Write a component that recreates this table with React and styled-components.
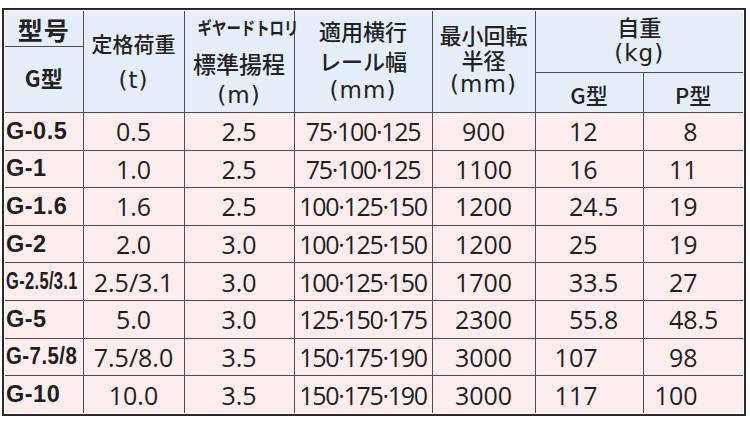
import React from 'react';
import styled, { createGlobalStyle } from 'styled-components';

const Global = createGlobalStyle`
  html, body { margin: 0; padding: 0; background: #ffffff; }
  body { font-family: "Noto Sans CJK JP", "Noto Sans", sans-serif; color: #222; }
`;

const LINE = '#4f4f4f';

const Frame = styled.div`
  box-sizing: border-box;
  width: 744px;
  margin: 8px 0 0 2px;
  border: 2px solid #2a2a2a;
  padding: 1px;
  background: #ffffff;
`;

const Table = styled.table`
  width: 738px;
  border-collapse: collapse;
  border-style: hidden;
  table-layout: fixed;
`;

const HeadRow = styled.tr`
  height: ${p => p.$h}px;
`;

const HeadCell = styled.th`
  background: #e5eef9;
  border: 1.5px solid ${LINE};
  padding: ${p => p.$pt || 0}px 0 ${p => p.$pb || 0}px 0;
  vertical-align: ${p => p.$top ? 'top' : 'middle'};
  text-align: center;
  font-weight: 500;
  color: #222;
  white-space: nowrap;
`;

const JpLine = styled.div`
  font-family: "Noto Sans CJK JP", sans-serif;
  font-size: ${p => p.$size || 22}px;
  line-height: ${p => p.$lh || 30}px;
  font-weight: ${p => p.$bold ? 700 : 500};
  letter-spacing: ${p => p.$ls || 0}px;
`;

const UnitLine = styled.div`
  font-family: "DejaVu Sans", sans-serif;
  font-size: 23px;
  line-height: ${p => p.$lh || 30}px;
  font-weight: 400;
  letter-spacing: 1px;
`;

const KanaLine = styled.div`
  font-family: "Noto Sans CJK JP", sans-serif;
  font-size: 18px;
  line-height: ${p => p.$lh || 30}px;
  font-weight: 700;
  white-space: nowrap;
`;

const Squeeze = styled.span`
  display: inline-block;
  transform: scaleX(${p => p.$x});
  transform-origin: ${p => p.$origin || 'center'};
  white-space: nowrap;
`;

const BodyRow = styled.tr`
  height: 37.6px;
`;

const Cell = styled.td`
  background: #fdeded;
  border: 1.5px solid ${LINE};
  padding: 0;
  text-align: center;
  vertical-align: middle;
  font-family: "Open Sans", "Noto Sans", sans-serif;
  font-size: 25px;
  font-weight: 400;
  color: #1e1e1e;
  white-space: nowrap;
  overflow: hidden;
`;

const ModelCell = styled(Cell)`
  text-align: left;
  padding-left: 1px;
  font-family: "Liberation Sans", Arial, sans-serif;
  font-size: 23.5px;
  font-weight: 700;
  letter-spacing: 0.5px;
`;

const RangeCell = styled(Cell)`
  letter-spacing: -1.3px;
`;

const DecCell = styled(Cell)`
  text-align: left;
`;

const IntPart = styled.span`
  display: inline-block;
  width: ${p => p.$w}px;
  text-align: right;
`;

const FracPart = styled.span`
  display: inline-block;
  text-align: left;
`;

const rows = [
  { model: 'G-0.5', load: '0.5', lift: '2.5', rail: '75·100·125', radius: '900', g: '12', p: '8' },
  { model: 'G-1', load: '1.0', lift: '2.5', rail: '75·100·125', radius: '1100', g: '16', p: '11' },
  { model: 'G-1.6', load: '1.6', lift: '2.5', rail: '100·125·150', radius: '1200', g: '24.5', p: '19' },
  { model: 'G-2', load: '2.0', lift: '3.0', rail: '100·125·150', radius: '1200', g: '25', p: '19' },
  { model: 'G-2.5/3.1', squeeze: 0.7, load: '2.5/3.1', lift: '3.0', rail: '100·125·150', radius: '1700', g: '33.5', p: '27' },
  { model: 'G-5', load: '5.0', lift: '3.0', rail: '125·150·175', radius: '2300', g: '55.8', p: '48.5' },
  { model: 'G-7.5/8', squeeze: 0.87, load: '7.5/8.0', lift: '3.5', rail: '150·175·190', radius: '3000', g: '107', p: '98' },
  { model: 'G-10', load: '10.0', lift: '3.5', rail: '150·175·190', radius: '3000', g: '117', p: '100' },
];

function Decimal({ value, w }) {
  const [i, f] = value.split('.');
  return (
    <DecCell>
      <IntPart $w={w}>{i}</IntPart>
      {f !== undefined && <FracPart>.{f}</FracPart>}
    </DecCell>
  );
}

export default function App() {
  return (
    <>
      <Global />
      <Frame>
        <Table>
          <colgroup>
            <col style={{ width: 78 }} />
            <col style={{ width: 101 }} />
            <col style={{ width: 110 }} />
            <col style={{ width: 138 }} />
            <col style={{ width: 103 }} />
            <col style={{ width: 108 }} />
            <col style={{ width: 100 }} />
          </colgroup>
          <thead>
            <HeadRow $h={35}>
              <HeadCell $pt={2}>
                <JpLine $size={25} $lh={33} $bold $ls={1}>型号</JpLine>
              </HeadCell>
              <HeadCell rowSpan={3} $top $pt={13}>
                <JpLine $size={21} $lh={38}>定格荷重</JpLine>
                <UnitLine $lh={36}>(t)</UnitLine>
              </HeadCell>
              <HeadCell rowSpan={3} $top $pt={1}>
                <KanaLine $lh={30}><Squeeze $x={0.8}>ギヤードトロリ</Squeeze></KanaLine>
                <JpLine $size={23} $lh={42}>標準揚程</JpLine>
                <UnitLine $lh={22}>(m)</UnitLine>
              </HeadCell>
              <HeadCell rowSpan={3} $top $pt={4}>
                <JpLine $size={22} $lh={30}>適用横行</JpLine>
                <JpLine $size={22} $lh={30}>レール幅</JpLine>
                <UnitLine $lh={30}>(mm)</UnitLine>
              </HeadCell>
              <HeadCell rowSpan={3} $top $pt={10}>
                <JpLine $size={22} $lh={26}>最小回転</JpLine>
                <JpLine $size={22} $lh={24}>半径</JpLine>
                <UnitLine $lh={27}>(mm)</UnitLine>
              </HeadCell>
              <HeadCell colSpan={2} rowSpan={2} $top $pt={2}>
                <JpLine $size={22} $lh={27}>自重</JpLine>
                <UnitLine $lh={26}>(kg)</UnitLine>
              </HeadCell>
            </HeadRow>
            <HeadRow $h={26}>
              <HeadCell rowSpan={2} $pb={6}>
                <JpLine $size={22} $lh={30} $bold>G型</JpLine>
              </HeadCell>
            </HeadRow>
            <HeadRow $h={40}>
              <HeadCell $pt={2}>
                <JpLine $size={22} $lh={30}>G型</JpLine>
              </HeadCell>
              <HeadCell $pt={2}>
                <JpLine $size={22} $lh={30}>P型</JpLine>
              </HeadCell>
            </HeadRow>
          </thead>
          <tbody>
            {rows.map(r => (
              <BodyRow key={r.model}>
                <ModelCell>
                  {r.squeeze ? (
                    <Squeeze $x={r.squeeze} $origin="left">{r.model}</Squeeze>
                  ) : r.model}
                </ModelCell>
                <Cell>{r.load}</Cell>
                <Cell>{r.lift}</Cell>
                <RangeCell>{r.rail}</RangeCell>
                <Cell>{r.radius}</Cell>
                <Decimal value={r.g} w={62} />
                <Decimal value={r.p} w={54} />
              </BodyRow>
            ))}
          </tbody>
        </Table>
      </Frame>
    </>
  );
}
